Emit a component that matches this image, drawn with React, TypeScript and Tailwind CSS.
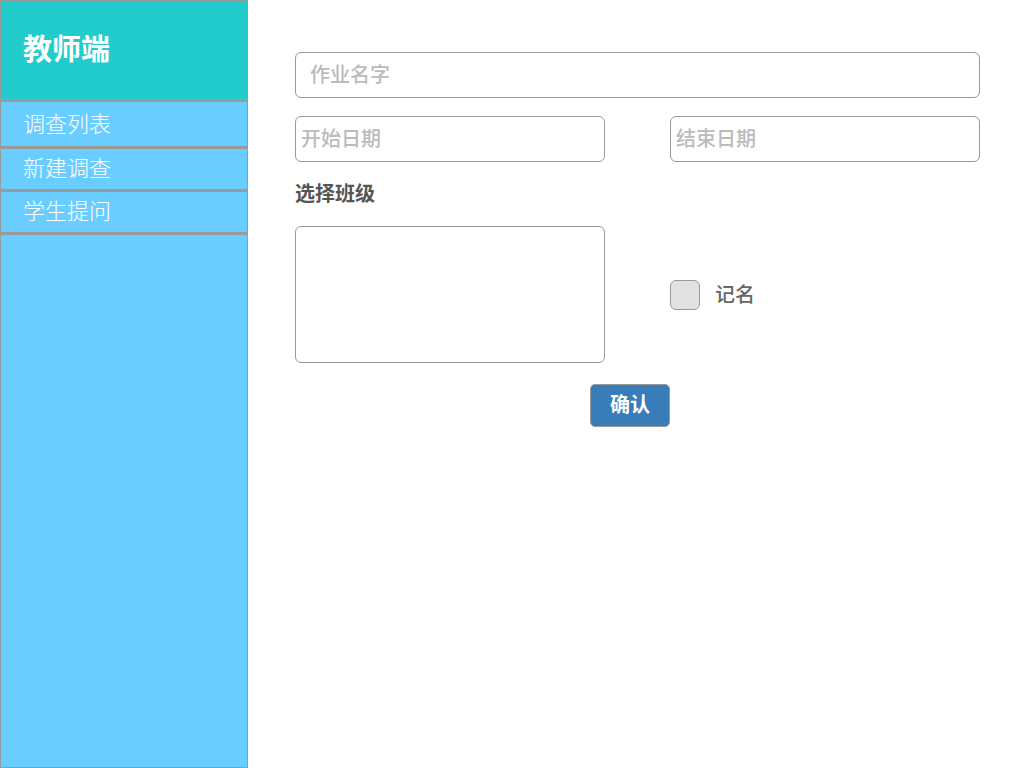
export default function App() {
    return (
        <div className="flex h-[768px] w-[1024px] bg-white font-['Noto_Sans_CJK_SC','Noto_Sans',sans-serif]">
            <aside className="flex h-full w-[248px] flex-col border border-[#999] bg-[#6acdff]">
                <div className="flex h-[98px] items-center bg-[#22cccc] pb-[5px] pl-[22px] text-[29px] font-bold text-white">
                    教师端
                </div>
                <div className="h-[3px] bg-[#999]"></div>
                <div className="flex h-[44px] items-center pb-[4px] pl-[22px] text-[22px] font-light text-white">
                    调查列表
                </div>
                <div className="h-[3px] bg-[#999]"></div>
                <div className="flex h-[40px] items-center pb-[6px] pl-[22px] text-[22px] font-light text-white">
                    新建调查
                </div>
                <div className="h-[3px] bg-[#999]"></div>
                <div className="flex h-[40px] items-center pb-[5px] pl-[22px] text-[22px] font-light text-white">
                    学生提问
                </div>
                <div className="h-[3px] bg-[#999]"></div>
            </aside>
            <main className="flex flex-col pl-[47px] pt-[52px]">
                <div className="flex h-[46px] w-[685px] items-center rounded-[6px] border border-[#999] pb-[3px] pl-[14px] text-[20px] font-medium text-[#bbb]">
                    作业名字
                </div>
                <div className="mt-[18px] flex gap-[65px]">
                    <div className="flex h-[46px] w-[310px] items-center rounded-[6px] border border-[#999] pb-[3px] pl-[5px] text-[20px] font-medium text-[#bbb]">
                        开始日期
                    </div>
                    <div className="flex h-[46px] w-[310px] items-center rounded-[6px] border border-[#999] pb-[3px] pl-[5px] text-[20px] font-medium text-[#bbb]">
                        结束日期
                    </div>
                </div>
                <div className="mt-[17px] text-[20px] font-bold leading-[28px] text-[#555]">选择班级</div>
                <div className="mt-[19px] flex items-center gap-[65px]">
                    <div className="h-[137px] w-[310px] rounded-[6px] border border-[#999]"></div>
                    <div className="flex items-center gap-[15px]">
                        <div className="h-[30px] w-[30px] rounded-[6px] border border-[#999] bg-[#e2e2e2]"></div>
                        <span className="pb-[2px] text-[20px] font-medium text-[#666]">记名</span>
                    </div>
                </div>
                <div className="mt-[21px] flex pl-[295px]">
                    <button className="flex h-[43px] w-[80px] items-center justify-center rounded-[5px] border border-[#999] bg-[#387dba] pb-[3px] text-[20px] font-bold text-white">
                        确认
                    </button>
                </div>
            </main>
        </div>
    );
}
